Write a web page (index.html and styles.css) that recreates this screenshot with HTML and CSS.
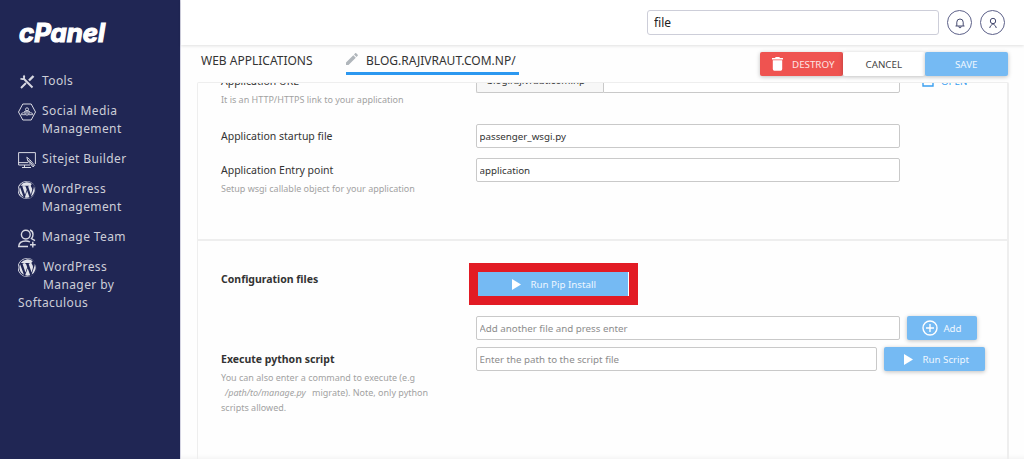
FILE: index.html
```html
<!DOCTYPE html>
<html lang="en">
<head>
  <meta charset="UTF-8" />
  <title>cPanel - Web Applications</title>
  <link rel="stylesheet" href="styles.css">
</head>
<body>
  <!-- Shared icon shapes -->
  <svg class="defs" width="0" height="0">
    <symbol id="wordpress" viewBox="0 0 122.5 122.5">
      <path d="M8.7 61.3c0 20.8 12.1 38.7 29.6 47.3L13.300 40a52.400 52.400 0 0 0-4.600 21.300zM96.700 58.600c0-6.500-2.300-11-4.300-14.500-2.700-4.300-5.200-8-5.200-12.300 0-4.800 3.700-9.300 8.900-9.300h.7a52.400 52.400 0 0 0-79.400 9.900h3.400c5.500 0 14-.7 14-.7 2.800-.2 3.100 4 .3 4.300 0 0-2.800.3-6 .5l19.100 56.900 11.500-34.500-8.200-22.400c-2.800-.2-5.500-.5-5.500-.5-2.800-.2-2.500-4.500.3-4.300 0 0 8.700.7 13.900.7 5.500 0 14-.7 14-.7 2.800-.2 3.200 4 .3 4.300 0 0-2.800.3-6 .5l19 56.500 5.200-17.500c2.300-7.300 4-12.500 4-17z"/>
      <path d="M62.200 65.900l-15.800 45.800a52.600 52.600 0 0 0 32.300-.8l-.4-.7zM107.400 36c.2 1.700.4 3.500.4 5.400 0 5.300-1 11.300-4 18.800l-16 46.300A52.500 52.500 0 0 0 107.400 36z"/>
      <path d="M61.300 0a61.300 61.300 0 1 0 0 122.500A61.300 61.300 0 0 0 61.300 0zm0 119.700a58.500 58.500 0 1 1 0-117 58.500 58.500 0 0 1 0 117z"/>
    </symbol>
    <symbol id="play" viewBox="0 0 9 11">
      <path d="M0 0l9 5.500L0 11z"/>
    </symbol>
  </svg>

  <aside class="sidebar">
    <svg class="logo" width="92" height="24" viewBox="0 0 92 24">
      <text x="1" y="20" textLength="86" lengthAdjust="spacingAndGlyphs">cPanel</text>
    </svg>
    <nav>
      <a class="item">
        <svg class="tools" width="18" height="18" viewBox="0 0 18 18">
          <path d="M5.500 5.500l9 9" stroke-width="1.900"/>
          <path d="M2.500 5.500q2.500 1.500 3.500-.5.700-1.200-.5-2.500M3 15l5-5" stroke-width="1.900"/>
          <path d="M15.500 3l-4.500 4.500" stroke-width="2.400"/>
        </svg>
        <span>Tools</span>
      </a>
      <a class="item">
        <svg class="line" width="18" height="18" viewBox="0 0 18 18">
          <path d="M4.800 1h8.400L17.500 9l-4.300 8H4.800L.5 9z"/>
          <g stroke-width=".9">
            <circle cx="9" cy="6.300" r="1.500"/>
            <path d="M6.200 9q.2-1.200 2.800-1.200T11.800 9zM3.200 11.700q0-2 2.300-2t2.300 2zM10.200 11.700q0-2 2.300-2t2.300 2zM9 9.500V13"/>
          </g>
        </svg>
        <span>Social Media<br>Management</span>
      </a>
      <a class="item">
        <svg class="line" width="18" height="18" viewBox="0 0 18 18">
          <path d="M12 14H.6V1.600h16.800V13M0 11.600h10M6.500 14v2M4 16.500h9"/>
          <path d="M8.800 6.200l1 3.700 5.200 6 1.700-1.500-5.200-6zM10.500 9l5 6"/>
        </svg>
        <span>Sitejet Builder</span>
      </a>
      <a class="item">
        <svg class="solid" width="18" height="18"><use href="#wordpress"/></svg>
        <span>WordPress<br>Management</span>
      </a>
      <a class="item">
        <svg class="line team" width="18" height="19" viewBox="0 0 18 19">
          <circle cx="7.800" cy="5.600" r="4.400"/>
          <path d="M12 1q3 1 3 4.500 0 2.500-1.500 4l3.500 2.200M10 17.500H.7q.3-5.500 7-5.500 2.500 0 4.300 1M14.800 12.800v5.700M12 15.700h5.700"/>
        </svg>
        <span>Manage Team</span>
      </a>
      <a class="item softaculous">
        <svg class="solid" width="19" height="19"><use href="#wordpress"/></svg>
        <span>WordPress<br>Manager by</span>
        <span class="wrap">Softaculous</span>
      </a>
    </nav>
  </aside>

  <main>
    <header class="topbar">
      <input class="search" type="text" value="file">
      <a class="round">
        <svg width="12" height="12" viewBox="0 0 12 12"><path d="M1.500 9h9M2.800 9V5.200a3.200 3.200 0 0 1 6.400 0V9M4.800 9.300q0 1.500 1.200 1.500t1.200-1.500"/></svg>
      </a>
      <a class="round">
        <svg width="12" height="12" viewBox="0 0 12 12"><circle cx="6" cy="4" r="2.700"/><path d="M2.700 11q0-2 3.300-4.300Q9.300 9 9.300 11"/></svg>
      </a>
    </header>

    <div class="toolbar">
      <a class="tab">WEB APPLICATIONS</a>
      <a class="tab active">
        <svg width="12" height="12" viewBox="0 0 12 12"><path d="M0 9.500V12h2.500l7.300-7.300-2.500-2.500zM11.700 2.800c.3-.3.300-.7 0-1L10.200.3c-.3-.3-.7-.3-1 0L8 1.500 10.500 4z"/></svg>
        BLOG.RAJIVRAUT.COM.NP/
      </a>
      <div class="actions">
        <button class="btn destroy">
          <svg width="11" height="14" viewBox="0 0 11 14"><path d="M.8 3.200h9.400V12q0 1.700-1.500 1.700H2.300Q.8 13.700.8 12zM0 .9h3L3.700 0h3.600L8 .9h3v1.500H0z"/></svg>
          DESTROY
        </button>
        <button class="btn cancel">CANCEL</button>
        <button class="btn save">SAVE</button>
      </div>
    </div>

    <div class="panel">
      <div class="section app">
        <div class="row url">
          <div class="label">Application URL<small>It is an HTTP/HTTPS link to your application</small></div>
          <div class="field url-field">
            <span class="domain">blog.rajivraut.com.np</span>
            <input type="text">
          </div>
          <a class="open">
            <svg width="12" height="12" viewBox="0 0 12 12"><path d="M5 1H1v10h10V7M7 1h4v4M11 1L5 7"/></svg>
            OPEN
          </a>
        </div>
        <div class="row startup">
          <div class="label">Application startup file</div>
          <input class="field" type="text" value="passenger_wsgi.py">
        </div>
        <div class="row entry">
          <div class="label">Application Entry point<small>Setup wsgi callable object for your application</small></div>
          <input class="field" type="text" value="application">
        </div>
      </div>

      <div class="section config">
        <div class="row pip">
          <div class="label bold">Configuration files</div>
          <div class="highlight">
            <button class="btn run"><svg width="9" height="11"><use href="#play"/></svg>Run Pip Install</button>
          </div>
        </div>
        <div class="row add-file">
          <div class="label"></div>
          <input class="field" type="text" placeholder="Add another file and press enter">
          <button class="btn add">
            <svg width="16" height="16" viewBox="0 0 16 16"><circle cx="8" cy="8" r="7"/><path d="M8 4v8M4 8h8"/></svg>
            Add
          </button>
        </div>
        <div class="row script">
          <div class="label bold">Execute python script
            <small>You can also enter a command to execute (e.g <i>/path/to/manage.py</i> migrate). Note, only python scripts allowed.</small>
          </div>
          <input class="field short" type="text" placeholder="Enter the path to the script file">
          <button class="btn run-script"><svg width="9" height="11"><use href="#play"/></svg>Run Script</button>
        </div>
      </div>
    </div>
  </main>
</body>
</html>
```
FILE: styles.css
```css
* {
  box-sizing: border-box;
}
body {
  margin: 0;
  display: flex;
  height: 459px;
  overflow: hidden;
  font-family: "Noto Sans", sans-serif;
  font-size: 10.5px;
  color: #333;
  background: #fefefe;
}
.defs {
  position: absolute;
}
svg {
  flex: none;
}

/* Sidebar */
.sidebar {
  width: 181px;
  padding: 22px 0 0 18px;
  background: #202654;
  border-right: 1px solid #d5d5e3;
  color: #cdced8;
}
.logo {
  display: block;
  overflow: visible;
}
.logo text {
  font: italic 700 25px Inter, sans-serif;
  fill: #fff;
  stroke: #fff;
  stroke-width: 1.2;
}
nav {
  margin-top: 26px;
}
.item {
  display: flex;
  flex-wrap: wrap;
  column-gap: 6px;
  margin-bottom: 12px;
  font-size: 12px;
  line-height: 18px;
  letter-spacing: .4px;
}
.item svg {
  margin: 1px 0 -1px;
  fill: none;
  stroke: #d8d9e2;
}
.item .solid {
  fill: #e2e3ea;
  stroke: none;
}
.item .team {
  stroke-width: 1.4;
  margin-bottom: -2px;
}
.item.softaculous svg {
  margin: 0;
}
.wrap {
  width: 100%;
}

/* Top bar */
main {
  flex: 1;
  display: flex;
  flex-direction: column;
  min-width: 0;
  box-shadow: inset 0 -5px 5px -4px rgba(0, 0, 0, .06);
}
.topbar {
  flex: none;
  display: flex;
  justify-content: flex-end;
  align-items: center;
  height: 45px;
  padding-right: 19px;
  background: #fff;
  box-shadow: 0 1px 3px rgba(0, 0, 0, .12);
}
input {
  font-family: inherit;
  border: 1px solid #c9c9c9;
  border-radius: 2px;
  background: #fff;
  color: #333;
  outline: none;
}
.search {
  width: 292px;
  height: 25px;
  padding: 0 6px;
  border-color: #cdced9;
  border-radius: 3px;
  font-size: 12px;
  color: #222;
}
.round {
  display: flex;
  justify-content: center;
  align-items: center;
  width: 25px;
  height: 25px;
  margin-left: 8px;
  border: 1px solid #5d6189;
  border-radius: 50%;
}
.round svg {
  fill: none;
  stroke: #44496f;
}

/* Tabs and actions */
.toolbar {
  flex: none;
  display: flex;
  height: 37px;
  padding: 7px 16.5px 0 20px;
}
.tab {
  height: 23px;
  line-height: 18px;
  font-size: 12px;
}
.active {
  display: flex;
  width: 173px;
  margin-left: 33px;
  border-bottom: 3px solid #2c98f0;
}
.active svg {
  margin: 1px 8.5px 0 0;
  fill: #b0b6bb;
}
.actions {
  display: flex;
  margin-left: auto;
}
.btn {
  display: flex;
  justify-content: center;
  align-items: center;
  height: 24px;
  padding: 0;
  border: 0;
  border-radius: 2px;
  background: #75baf3;
  box-shadow: 0 1px 4px rgba(0, 0, 0, .25);
  font-family: inherit;
  font-size: 9.75px;
  color: #eef7ff;
}
.btn svg {
  fill: #fff;
}
.actions .btn {
  width: 82.5px;
}
.actions .destroy {
  padding-left: 4px;
  background: #ef5350;
  color: #fde5e4;
}
.destroy svg {
  margin-right: 9px;
}
.actions .cancel {
  background: #fff;
  color: #444;
}

/* Scrolled content panel */
.panel {
  flex: 1;
  width: 812px;
  margin-left: 16px;
  overflow: hidden;
  border: 1px solid #eee;
  border-width: 1px 2px 0 1px;
  border-radius: 2px 2px 0 0;
}
.section {
  padding-left: 23px;
}
.app {
  height: 172px;
  border-bottom: 2px solid #eee;
}
.row {
  display: flex;
  align-items: flex-start;
}
.label {
  width: 255px;
  padding-top: 4px;
  line-height: 16px;
}
.label small {
  display: block;
  width: 215px;
  margin-top: 3px;
  font-size: 9px;
  font-weight: normal;
  line-height: 15px;
  color: #a2a2a2;
}
.label i {
  margin: 0 4px;
}
.bold {
  font-weight: bold;
}
.field {
  width: 424px;
  height: 24px;
  padding: 0 2.5px;
  font-size: 9.75px;
}
.field::placeholder {
  color: #8d8d8d;
}
.url {
  height: 55px;
  margin-top: -14px;
}
.url-field {
  display: flex;
  padding: 0;
}
.domain {
  width: 127px;
  padding-left: 10px;
  border: 1px solid #c9c9c9;
  border-right: 0;
  border-radius: 2px 0 0 2px;
  background: #f7f7f7;
  line-height: 22px;
}
.url-field input {
  width: 297px;
  border-radius: 0 2px 2px 0;
}
.open {
  display: flex;
  margin-left: 22px;
  padding-top: 6px;
  line-height: 14px;
  font-size: 9.75px;
  color: #3a9ff0;
}
.open svg {
  margin-right: 7px;
  fill: none;
  stroke: #3a9ff0;
  stroke-width: 1.4;
}
.startup {
  height: 34px;
}
.config {
  padding-top: 22px;
}
.pip {
  height: 53px;
}
.pip .label {
  width: 248px;
  padding-top: 8px;
}
.highlight {
  width: 169px;
  height: 42px;
  padding: 9px;
  background: #e21b24;
}
.run {
  width: 151px;
  padding-left: 2px;
  border-radius: 0;
  border-right: 1px solid #fff;
  box-shadow: none;
}
.run svg,
.run-script svg {
  margin-right: 9.5px;
}
.add-file {
  height: 31px;
}
.add {
  width: 70px;
  margin-left: 7px;
}
.add svg {
  margin-right: 5px;
  fill: none;
  stroke: #fff;
  stroke-width: 1.4;
}
.short {
  width: 401px;
}
.run-script {
  width: 101px;
  margin-left: 7px;
  padding-left: 4px;
}
```
